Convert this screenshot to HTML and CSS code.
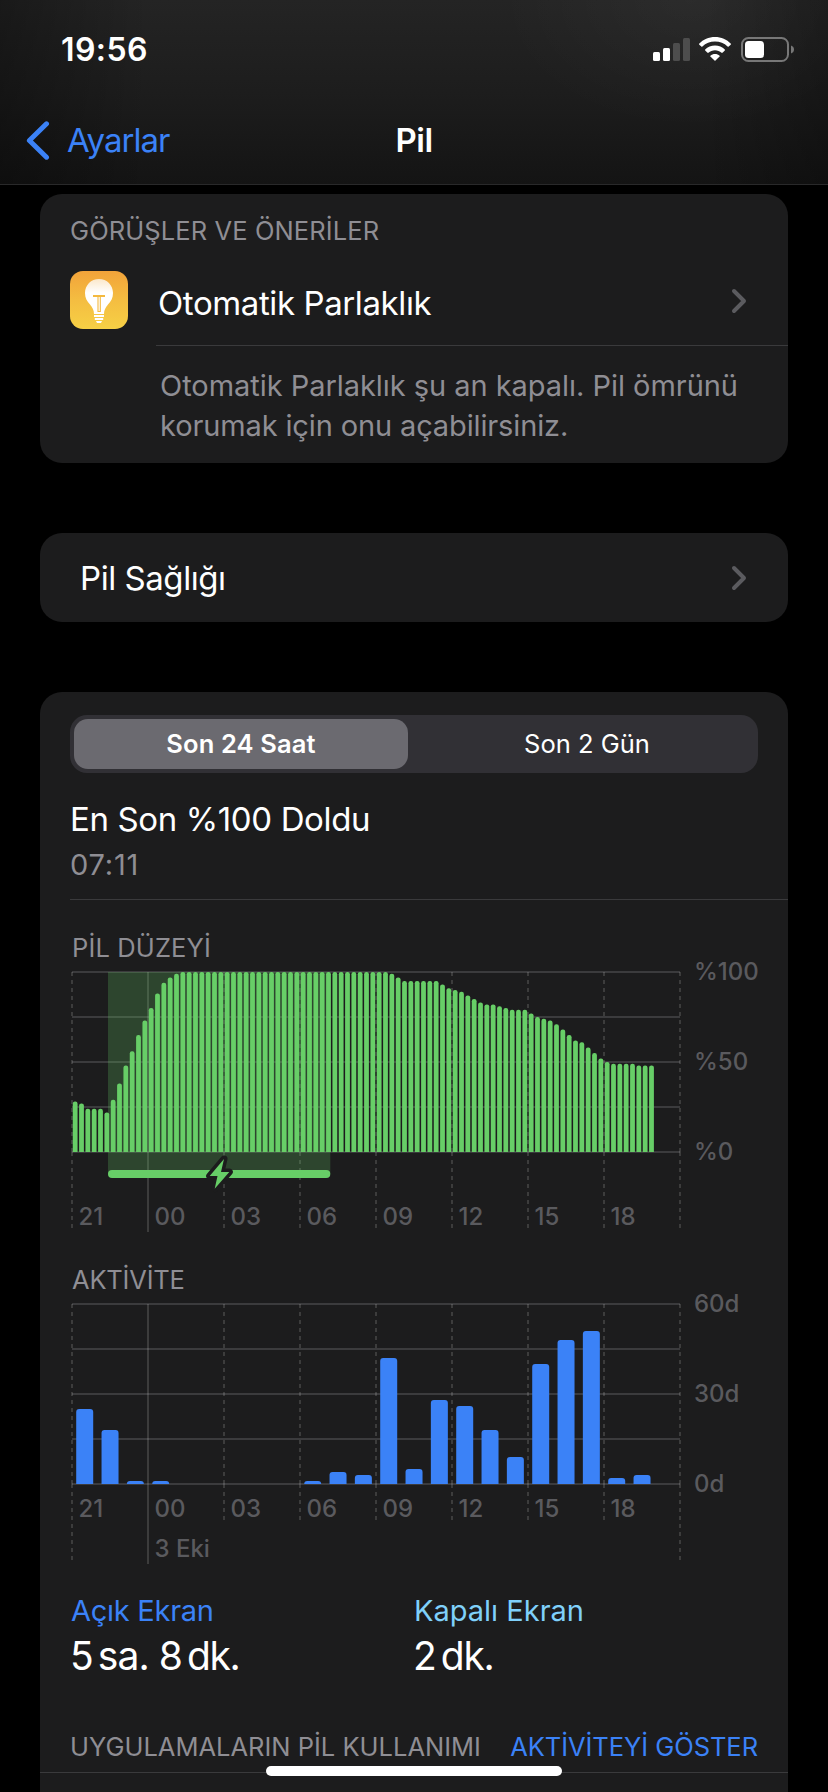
FILE: index.html
```html
<!DOCTYPE html>
<html lang="tr">
<head>
    <meta charset="UTF-8">
    <title>Pil</title>
    <meta name="viewport" content="width=device-width, initial-scale=1.0">
    <link rel="stylesheet" href="styles.css">
</head>
<body>
    <div class="header">
        <div class="status-bar">
            <div class="clock">19:56</div>
            <div class="status-icons">
                <svg class="signal" width="37" height="23" viewBox="0 0 37 23">
                    <rect x="0" y="14" width="7" height="9" rx="1.5" fill="#fff"/>
                    <rect x="10" y="10" width="7" height="13" rx="1.5" fill="#fff"/>
                    <rect x="20" y="5" width="7" height="18" rx="1.5" fill="#4d4d4d"/>
                    <rect x="30" y="0" width="7" height="23" rx="1.5" fill="#4d4d4d"/>
                </svg>
                <svg class="wifi" width="32" height="24" viewBox="0 0 32 24">
                    <path d="M16 0C9.8 0 4.100 2.500 .3 6.600Q-.1 7.200 .3 7.700L2.300 9.500Q2.900 9.900 3.400 9.400C6.700 6.200 11.100 4.500 16 4.500S25.300 6.200 28.600 9.400Q29.100 9.900 29.700 9.500L31.700 7.700Q32.100 7.200 31.700 6.600C27.900 2.500 22.200 0 16 0Z" fill="#fff"/>
                    <path d="M16 8.600C12.200 8.600 8.700 10 6.200 12.400Q5.800 12.900 6.200 13.400L8.500 15.700Q9 16 9.500 15.700C11.200 14.100 13.500 13.200 16 13.200S20.800 14.100 22.500 15.700Q23 16 23.500 15.700L25.800 13.400Q26.200 12.900 25.800 12.400C23.300 10 19.800 8.600 16 8.600Z" fill="#fff"/>
                    <path d="M16 17C14.200 17 12.600 17.600 11.400 18.700Q11 19.200 11.400 19.600L15.500 23.600Q16 24 16.500 23.600L20.600 19.600Q21 19.200 20.600 18.700C19.400 17.600 17.800 17 16 17Z" fill="#fff"/>
                </svg>
                <svg class="battery" width="54" height="25" viewBox="0 0 54 25">
                    <rect x="1" y="1" width="46" height="23" rx="6.500" fill="none" stroke="#777" stroke-width="2"/>
                    <rect x="4" y="4" width="19" height="17" rx="3.500" fill="#fff"/>
                    <path d="M50 8.500C52 9.200 53 10.700 53 12.500S52 15.800 50 16.500Z" fill="#777"/>
                </svg>
            </div>
        </div>
        <div class="nav">
            <div class="back">
                <svg width="24" height="39" viewBox="0 0 24 39">
                    <path d="M20.500 2.800L3.400 19.500L20.500 36.200" fill="none" stroke="#3b82f7" stroke-width="5" stroke-linecap="round" stroke-linejoin="round"/>
                </svg>
                <span>Ayarlar</span>
            </div>
            <div class="nav-title">Pil</div>
            <div></div>
        </div>
    </div>

    <div class="card suggestions">
        <div class="section-title">GÖRÜŞLER VE ÖNERİLER</div>
        <div class="suggestion">
            <svg class="bulb" width="58" height="58" viewBox="0 0 58 58">
                <defs>
                    <linearGradient id="bulb-bg" x1="0" y1="0" x2="0" y2="1">
                        <stop offset="0" stop-color="#f2a33a"/>
                        <stop offset="0.500" stop-color="#f4bd41"/>
                        <stop offset="1" stop-color="#f6d045"/>
                    </linearGradient>
                    <linearGradient id="bulb-glass" x1="0" y1="0" x2="0" y2="1">
                        <stop offset="0" stop-color="#fbe8cb"/>
                        <stop offset="0.400" stop-color="#fff"/>
                    </linearGradient>
                </defs>
                <rect width="58" height="58" rx="13" fill="url(#bulb-bg)"/>
                <path d="M29 8C21 8 15 14.200 15 22C15 27 17 30.200 20 33.500C22.500 36.500 24 39 24 43H34C34 39 35.500 36.500 38 33.500C41 30.200 43 27 43 22C43 14.200 37 8 29 8Z" fill="url(#bulb-glass)"/>
                <path d="M23 24H35V26H23Z" fill="#f4b93f"/>
                <path d="M28 26V40.500H30.300V26" fill="none" stroke="#f4bb41" stroke-width="1.100"/>
                <path d="M24 44H34V46H24ZM24.800 47H33.200V49H24.800ZM26 50H32L31 52H27Z" fill="#fff"/>
            </svg>
            <div class="suggestion-head">
                <span>Otomatik Parlaklık</span>
                <svg class="chevron" width="16" height="26" viewBox="0 0 16 26">
                    <path d="M3 3L13 13L3 23" fill="none" stroke="#5b5b5f" stroke-width="4" stroke-linecap="round" stroke-linejoin="round"/>
                </svg>
            </div>
        </div>
        <div class="suggestion-text">
            <div class="line">Otomatik Parlaklık şu an kapalı. Pil ömrünü</div>
            <div class="line line-tight">korumak için onu açabilirsiniz.</div>
        </div>
    </div>

    <div class="card health">
        <span>Pil Sağlığı</span>
        <svg class="chevron" width="16" height="26" viewBox="0 0 16 26">
            <path d="M3 3L13 13L3 23" fill="none" stroke="#5b5b5f" stroke-width="4" stroke-linecap="round" stroke-linejoin="round"/>
        </svg>
    </div>

    <div class="card usage">
        <div class="segmented">
            <div class="segment active">Son 24 Saat</div>
            <div class="segment">Son 2 Gün</div>
        </div>
        <div class="last-charge">
            <div class="last-charge-title">En Son %100 Doldu</div>
            <div class="last-charge-time">07:11</div>
        </div>

        <div class="chart-title">PİL DÜZEYİ</div>
        <svg id="level-chart" class="chart" width="718" height="296" viewBox="0 0 718 296"></svg>

        <div class="chart-title activity-title">AKTİVİTE</div>
        <svg id="activity-chart" class="chart" width="718" height="293" viewBox="0 0 718 293"></svg>

        <div class="totals">
            <div class="total">
                <div class="total-label screen-on">Açık Ekran</div>
                <div class="total-value"><span class="num">5</span><span class="unit unit-hour">sa.</span><span class="num">8</span><span class="unit">dk.</span></div>
            </div>
            <div class="total">
                <div class="total-label screen-off">Kapalı Ekran</div>
                <div class="total-value"><span class="num">2</span><span class="unit">dk.</span></div>
            </div>
        </div>

        <div class="apps-header">
            <span class="apps-title">UYGULAMALARIN PİL KULLANIMI</span>
            <span class="apps-link">AKTİVİTEYİ GÖSTER</span>
        </div>
    </div>

    <div class="home-indicator"></div>

    <script src="script.js"></script>
</body>
</html>
```
FILE: styles.css
```css
body {
    margin: 0;
    background-color: #000;
    color: #fff;
    font-family: Inter, "Liberation Sans", sans-serif;
    font-size: 33px;
}
svg {
    display: block;
    flex: none;
}

.header {
    box-sizing: border-box;
    height: 185px;
    border-bottom: 1px solid #29292a;
    background:
        radial-gradient(ellipse 190px 130px at 690px 0, rgba(255, 255, 255, 0.035), transparent),
        linear-gradient(90deg, rgba(0, 0, 0, 0.3), transparent 18%, transparent 85%, rgba(0, 0, 0, 0.25)),
        linear-gradient(#242424, #1d1d1d 50%, #141414);
}
.status-bar {
    display: flex;
    justify-content: space-between;
    height: 96px;
    padding: 0 34px 0 61px;
}
.clock {
    padding-top: 30px;
    line-height: 40px;
    font-size: 32px;
    font-weight: 600;
    letter-spacing: 0.4px;
}
.status-icons {
    display: flex;
    align-items: flex-start;
    padding-top: 37px;
}
.signal {
    margin: 1px 9px 0 0;
}
.wifi {
    margin-right: 10px;
}
.battery {
    margin-right: -1px;
}
.nav {
    display: grid;
    grid-template-columns: 1fr auto 1fr;
    align-items: center;
    height: 88px;
    padding: 0 26px;
}
.back {
    display: flex;
    align-items: center;
    gap: 17px;
    color: #3b82f7;
    letter-spacing: -1px;
}
.nav-title {
    font-weight: 600;
    letter-spacing: -0.5px;
}

.card {
    box-sizing: border-box;
    width: 748px;
    margin: 0 40px 70px;
    border-radius: 22px;
    background-color: #1c1c1d;
}
.section-title {
    line-height: 36px;
    padding-left: 30px;
    color: #8f8e94;
    font-size: 25.5px;
    letter-spacing: 0.1px;
}
.suggestions {
    height: 269px;
    margin-top: 9px;
    padding-top: 19px;
}
.suggestion {
    display: flex;
    height: 97px;
    padding-left: 30px;
}
.bulb {
    margin: 22px 28px 0 0;
}
.suggestion-head {
    display: flex;
    align-items: center;
    justify-content: space-between;
    flex: 1;
    box-sizing: border-box;
    padding: 12px 41px 0 2px;
    border-bottom: 1px solid #3a3a3c;
    letter-spacing: -0.4px;
}
.suggestion-head .chevron {
    margin-top: -4px;
}
.suggestion-text {
    padding: 20px 0 0 120px;
    color: #8f8e94;
    font-size: 29px;
    line-height: 40px;
    white-space: nowrap;
}
.line {
    letter-spacing: -0.04px;
}
.line-tight {
    letter-spacing: -0.13px;
}

.health {
    display: flex;
    align-items: center;
    justify-content: space-between;
    height: 89px;
    padding: 0 41px 0 40px;
    letter-spacing: -0.45px;
}

.usage {
    height: 1100px;
    margin-bottom: 0;
    padding-top: 23px;
    border-radius: 22px 22px 0 0;
}
.segmented {
    display: flex;
    box-sizing: border-box;
    height: 58px;
    margin: 0 30px;
    padding: 4px;
    border-radius: 17px;
    background-color: #313035;
    font-size: 25.5px;
}
.segment {
    flex: 1;
    line-height: 50px;
    padding-left: 12px;
    text-align: center;
}
.segment.active {
    flex: none;
    width: 334px;
    padding: 0;
    border-radius: 14px;
    background-color: #6b6a70;
    font-weight: 600;
    letter-spacing: 0.14px;
}
.last-charge {
    margin-left: 30px;
    padding: 24px 0 14px;
    border-bottom: 1px solid #3a3a3c;
}
.last-charge-title {
    line-height: 44px;
    letter-spacing: -0.37px;
}
.last-charge-time {
    margin-top: 4px;
    line-height: 40px;
    color: #8f8e94;
    font-size: 29px;
    letter-spacing: 0.82px;
}
.chart-title {
    margin-top: 30px;
    padding-left: 32px;
    line-height: 36px;
    color: #8f8e94;
    font-size: 25.5px;
    letter-spacing: 0.14px;
}
.activity-title {
    margin-top: 0;
    letter-spacing: -0.2px;
}
.chart {
    margin-left: 30px;
    overflow: visible;
}
.chart text {
    fill: #5a5a5e;
    font-size: 24px;
    font-weight: 500;
}

.totals {
    display: flex;
    padding-left: 31px;
}
.total {
    width: 343px;
}
.total-label {
    line-height: 40px;
    font-size: 29px;
    letter-spacing: -0.27px;
}
.screen-on {
    color: #3b82f7;
}
.screen-off {
    color: #7fd0fa;
    letter-spacing: 0;
}
.total-value {
    display: flex;
    line-height: 50px;
    font-size: 39px;
}
.num {
    margin-left: -1px;
}
.unit {
    margin-left: 4px;
    letter-spacing: -1.3px;
}
.unit-hour {
    margin-right: 11px;
    letter-spacing: -0.9px;
}
.apps-header {
    display: flex;
    justify-content: space-between;
    margin-top: 48px;
    padding: 0 30px 7px;
    border-bottom: 1px solid #3a3a3c;
    line-height: 36px;
    color: #8f8e94;
    font-size: 25.5px;
}
.apps-link {
    color: #3b82f7;
    letter-spacing: -0.05px;
}

.home-indicator {
    position: fixed;
    left: 266px;
    bottom: 16px;
    width: 296px;
    height: 10px;
    border-radius: 5px;
    background-color: #fff;
}
```
FILE: script.js
```js
const NS = 'http://www.w3.org/2000/svg';
const LEFT = 2;
const STEP = 76;
const HEIGHT = 180;
const hours = ['21', '00', '03', '06', '09', '12', '15', '18'];

// battery level in percent, one value per quarter of an hour
const levels = [
    28, 27, 24, 24, 24, 22, 29, 38, 48, 56, 65, 73, 80, 88, 94, 97, 99,
    ...Array(33).fill(100),
    99, 97, 95, 95, 95, 95, 95, 95, 93, 91, 90, 89, 87, 85, 83, 82, 82, 81, 80, 79, 79, 79,
    77, 75, 74, 73, 71, 68, 65, 62, 61, 58, 55, 52, 50, 49, 49, 49, 49, 48, 48, 48
];
// minutes of use per hour
const minutes = [25, 18, 1, 1, 0, 0, 0, 0, 0, 1, 4, 3, 42, 5, 28, 26, 18, 9, 40, 48, 51, 2, 3];

function add(svg, name, attrs, text) {
    const el = document.createElementNS(NS, name);
    for (const key in attrs) {
        el.setAttribute(key, attrs[key]);
    }
    if (text) {
        el.textContent = text;
    }
    svg.appendChild(el);
}

function vline(svg, x, y1, y2, dashed) {
    add(svg, 'line', {
        x1: x, x2: x, y1: y1, y2: y2, stroke: '#fff', 'stroke-opacity': 0.14,
        'stroke-width': 2, 'stroke-dasharray': dashed ? '4 4' : 'none'
    });
}

function drawGrid(svg, top, labels, tail, edgeTail, dayTail) {
    for (let i = 0; i <= 4; i++) {
        const y = top + i * HEIGHT / 4;
        add(svg, 'line', { x1: LEFT, x2: LEFT + 8 * STEP, y1: y, y2: y, stroke: '#3b3b3d', 'stroke-width': 2 });
    }
    for (let i = 0; i <= 8; i++) {
        const x = LEFT + i * STEP;
        const bottom = top + HEIGHT;
        if (i === 1) {
            vline(svg, x, top, bottom + dayTail, false);
        } else {
            vline(svg, x, top, bottom, true);
            vline(svg, x, bottom, bottom + (i % 8 === 0 ? edgeTail : tail), true);
        }
    }
    labels.forEach((label, i) => {
        add(svg, 'text', { x: 624, y: top + i * HEIGHT / 2 + 8 }, label);
    });
}

function drawHours(svg, y) {
    hours.forEach((hour, i) => {
        add(svg, 'text', { x: LEFT + i * STEP + 6.5, y: y }, hour);
    });
}

// column with rounded top corners
function column(svg, x, base, w, h, r, fill) {
    r = Math.min(r, h);
    add(svg, 'path', {
        d: `M${x} ${base}v${r - h}q0 ${-r} ${r} ${-r}h${w - 2 * r}q${r} 0 ${r} ${r}v${h - r}z`,
        fill: fill
    });
}

const level = document.getElementById('level-chart');
drawGrid(level, 6, ['%100', '%50', '%0'], 76, 76, 80);
drawHours(level, 258.5);
// charging period
add(level, 'rect', { x: 38, y: 6, width: 222.3, height: 202, fill: '#67ce67', 'fill-opacity': 0.23 });
levels.forEach((value, i) => {
    column(level, LEFT + (i + 0.5) * STEP / 12 - 2.4, 186, 4.8, value * HEIGHT / 100, 2.2, '#67ce67');
});
add(level, 'rect', { x: 38, y: 204, width: 222.3, height: 8, rx: 4, fill: '#67ce67' });
const bolt = 'M154 193L139.700 210H147.500L144.700 222.700L159.300 206H151Z';
add(level, 'path', { d: bolt, fill: '#1c1c1d', stroke: '#1c1c1d', 'stroke-width': 7, 'stroke-linejoin': 'round' });
add(level, 'path', { d: bolt, fill: '#67ce67' });

const activity = document.getElementById('activity-chart');
drawGrid(activity, 6, ['60d', '30d', '0d'], 36, 76, 80);
drawHours(activity, 218.5);
add(activity, 'text', { x: LEFT + STEP + 6.5, y: 258.5 }, '3 Eki');
minutes.forEach((value, i) => {
    if (value > 0) {
        column(activity, LEFT + i * STEP / 3 + 4.2, 186, 17, value * 3, 3, '#3b82f7');
    }
});
```
